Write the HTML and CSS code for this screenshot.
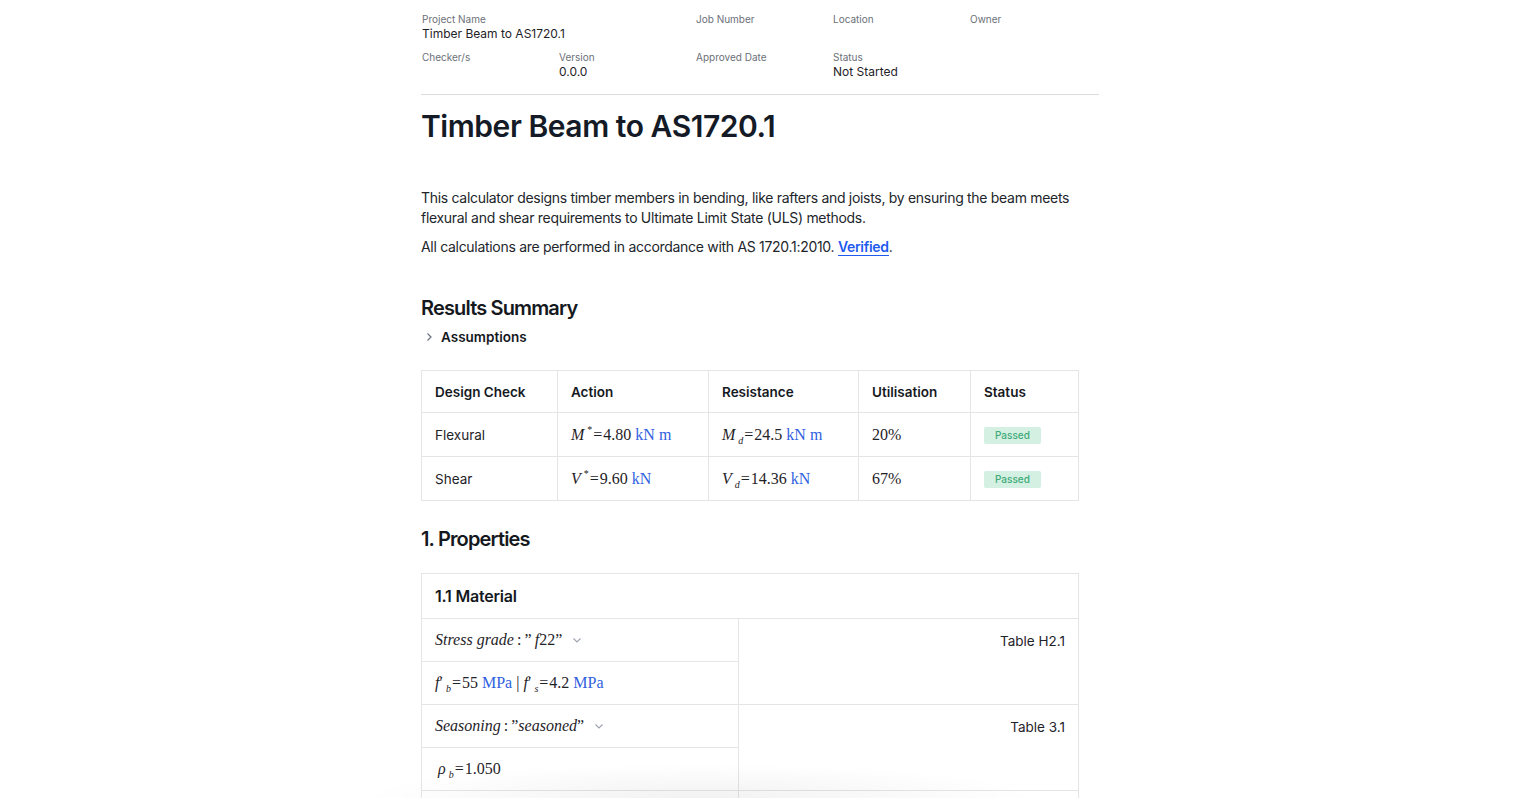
FILE: index.html
```html
<!DOCTYPE html>
<html lang="en">
<head>
  <meta charset="UTF-8" />
  <title>Timber Beam to AS1720.1</title>
  <meta name="viewport" content="width=device-width, initial-scale=1.0">
  <link rel="stylesheet" href="styles.css">
</head>
<body>

  <div class="page">

    <!-- Datos del proyecto -->
    <div class="meta">
      <div class="meta-item wide">
        <span class="meta-label">Project Name</span>
        <span class="meta-value">Timber Beam to AS1720.1</span>
      </div>
      <div class="meta-item">
        <span class="meta-label">Job Number</span>
        <span class="meta-value"></span>
      </div>
      <div class="meta-item">
        <span class="meta-label">Location</span>
        <span class="meta-value"></span>
      </div>
      <div class="meta-item">
        <span class="meta-label">Owner</span>
        <span class="meta-value"></span>
      </div>

      <div class="meta-item">
        <span class="meta-label">Checker/s</span>
        <span class="meta-value"></span>
      </div>
      <div class="meta-item">
        <span class="meta-label">Version</span>
        <span class="meta-value">0.0.0</span>
      </div>
      <div class="meta-item">
        <span class="meta-label">Approved Date</span>
        <span class="meta-value"></span>
      </div>
      <div class="meta-item">
        <span class="meta-label">Status</span>
        <span class="meta-value">Not Started</span>
      </div>
    </div>

    <div class="content">
      <h1 class="title">Timber Beam to AS1720.1</h1>

      <p class="intro first">This calculator designs timber members in bending, like rafters and joists, by ensuring the beam meets flexural and shear requirements to Ultimate Limit State (ULS) methods.</p>
      <p class="intro">All calculations are performed in accordance with AS 1720.1:2010. <a class="verified" href="#">Verified</a>.</p>

      <h2 class="section">Results Summary</h2>

      <div class="toggle">
        <svg class="chev-right" width="8" height="10" viewBox="0 0 8 10">
          <path d="M2.5 1.5 L6 5 L2.5 8.5" fill="none" stroke="#6b7280" stroke-width="1.2"/>
        </svg>
        <span>Assumptions</span>
      </div>

      <table class="summary">
        <thead>
          <tr>
            <th class="c1">Design Check</th>
            <th class="c2">Action</th>
            <th class="c3">Resistance</th>
            <th class="c4">Utilisation</th>
            <th class="c5">Status</th>
          </tr>
        </thead>
        <tbody>
          <tr>
            <td>Flexural</td>
            <td class="math"><i>M</i><sup>*</sup><span class="eq">=</span>4.80 <span class="unit">kN m</span></td>
            <td class="math"><i>M</i><sub><i>d</i></sub><span class="eq">=</span>24.5 <span class="unit">kN m</span></td>
            <td class="math">20%</td>
            <td><span class="badge">Passed</span></td>
          </tr>
          <tr>
            <td>Shear</td>
            <td class="math"><i>V</i><sup>*</sup><span class="eq">=</span>9.60 <span class="unit">kN</span></td>
            <td class="math"><i>V</i><sub><i>d</i></sub><span class="eq">=</span>14.36 <span class="unit">kN</span></td>
            <td class="math">67%</td>
            <td><span class="badge">Passed</span></td>
          </tr>
        </tbody>
      </table>

      <h2 class="section props">1. Properties</h2>

      <div class="panel">
        <div class="panel-head">1.1 Material</div>

        <div class="group">
          <div class="inputs">
            <div class="row">
              <span class="math"><i>Stress grade</i><span class="colon">:</span>”&thinsp;<i>f</i>22”</span>
              <svg class="chev-down" width="10" height="8" viewBox="0 0 10 8">
                <path d="M1.5 2.5 L5 6 L8.5 2.5" fill="none" stroke="#9ca3af" stroke-width="1.1"/>
              </svg>
            </div>
            <div class="row">
              <span class="math"><i>f</i>′<sub><i>b</i></sub><span class="eq">=</span>55 <span class="unit">MPa</span> | <i>f</i>′<sub><i>s</i></sub><span class="eq">=</span>4.2 <span class="unit">MPa</span></span>
            </div>
          </div>
          <div class="ref">Table H2.1</div>
        </div>

        <div class="group">
          <div class="inputs">
            <div class="row">
              <span class="math"><i>Seasoning</i><span class="colon">:</span>”<i>seasoned</i>”</span>
              <svg class="chev-down" width="10" height="8" viewBox="0 0 10 8">
                <path d="M1.5 2.5 L5 6 L8.5 2.5" fill="none" stroke="#9ca3af" stroke-width="1.1"/>
              </svg>
            </div>
            <div class="row">
              <span class="math rho"><i>ρ</i><sub><i>b</i></sub><span class="eq">=</span>1.050</span>
            </div>
          </div>
          <div class="ref">Table 3.1</div>
        </div>

        <div class="group">
          <div class="inputs">
            <div class="row"></div>
          </div>
          <div class="ref"></div>
        </div>
      </div>
    </div>

  </div>

  <div class="bottom-fade"></div>

</body>
</html>
```

FILE: styles.css
```css
html, body {
  margin: 0;
  padding: 0;
  background: #fff;
  font-family: Inter, "Noto Sans", sans-serif;
  color: #1f2328;
  overflow: hidden;
}

.page {
  width: 678px;
  margin: 0 auto;
  padding-top: 12px;
}

/* Datos del proyecto */
.meta {
  display: grid;
  grid-template-columns: repeat(5, 137px);
  row-gap: 8px;
  padding-bottom: 14px;
  padding-left: 1px;
  border-bottom: 1px solid #d9dbde;
}

.meta-item {
  display: flex;
  flex-direction: column;
  min-height: 30px;
}

.meta-item.wide {
  grid-column: span 2;
}

.meta-label {
  font-size: 10px;
  line-height: 14px;
  color: #6b7078;
}

.meta-value {
  font-size: 12px;
  line-height: 16px;
  color: #1f2328;
}

.content {
  width: 658px;
}

.title {
  margin: 13px 0 0;
  font-size: 30px;
  line-height: 36px;
  font-weight: 600;
  letter-spacing: -0.45px;
  color: #141b26;
}

.intro {
  margin: 0 0 9px;
  font-size: 14px;
  line-height: 20px;
  letter-spacing: -0.3px;
  color: #22262b;
}

.intro.first {
  margin-top: 44px;
}

.verified {
  color: #1f5bef;
  font-weight: 600;
  text-decoration: none;
  border-bottom: 1.5px solid #1f5bef;
}

.section {
  margin: 37px 0 0;
  font-size: 20px;
  line-height: 28px;
  font-weight: 600;
  letter-spacing: -0.85px;
  color: #15191e;
}

.toggle {
  display: flex;
  align-items: center;
  gap: 8px;
  margin-top: 5px;
  padding-left: 4px;
  height: 20px;
  font-size: 13.5px;
  font-weight: 600;
  color: #15191e;
}

.summary {
  margin-top: 23px;
  width: 658px;
  border-collapse: collapse;
  font-size: 13.5px;
  color: #1f2328;
}

.summary th,
.summary td {
  border: 1px solid #e4e5e7;
  padding: 0 0 0 13px;
  height: 41px;
  text-align: left;
}

.summary td {
  height: 43px;
}

.summary th {
  font-weight: 600;
  color: #15191e;
}

.summary .c1 { width: 122px; }
.summary .c2 { width: 137px; }
.summary .c3 { width: 136px; }
.summary .c4 { width: 98px; }

.math {
  font-family: "Liberation Serif", "DejaVu Serif", serif;
  font-size: 16px;
  color: #1f2328;
}

.math sup,
.math sub {
  font-size: 10px;
  line-height: 0;
  margin-left: 3px;
}

.eq {
  margin: 0 1px;
}

.colon {
  margin: 0 3px;
}

.unit {
  color: #2f5fe0;
}

.badge {
  display: inline-block;
  padding: 0 11px;
  height: 17px;
  line-height: 17px;
  background: #d3f0e2;
  color: #3faa78;
  font-family: Inter, sans-serif;
  font-size: 10px;
  font-weight: 500;
  border-radius: 2px;
}

.props {
  margin-top: 24px;
}

.panel {
  margin-top: 20px;
  border: 1px solid #e4e5e7;
  border-bottom: none;
}

.panel-head {
  height: 44px;
  line-height: 44px;
  padding-left: 13px;
  font-size: 16px;
  font-weight: 600;
  letter-spacing: -0.2px;
  color: #15191e;
  border-bottom: 1px solid #e4e5e7;
}

.group {
  display: grid;
  grid-template-columns: 317px 1fr;
  border-bottom: 1px solid #e4e5e7;
}

.inputs {
  border-right: 1px solid #e4e5e7;
}

.row {
  display: flex;
  align-items: center;
  height: 42px;
  padding-left: 13px;
}

.row + .row {
  border-top: 1px solid #e4e5e7;
}

.rho {
  padding-left: 3px;
}

.chev-down {
  margin-left: 10px;
}

.ref {
  padding: 14px 13px 0 0;
  text-align: right;
  font-size: 13.5px;
  color: #1f2328;
}

/* sombra inferior */
.bottom-fade {
  position: fixed;
  left: 360px;
  bottom: 0;
  width: 680px;
  height: 34px;
  background: radial-gradient(ellipse at 50% 100%, rgba(0,0,0,0.05), rgba(0,0,0,0) 70%);
  pointer-events: none;
}
```
